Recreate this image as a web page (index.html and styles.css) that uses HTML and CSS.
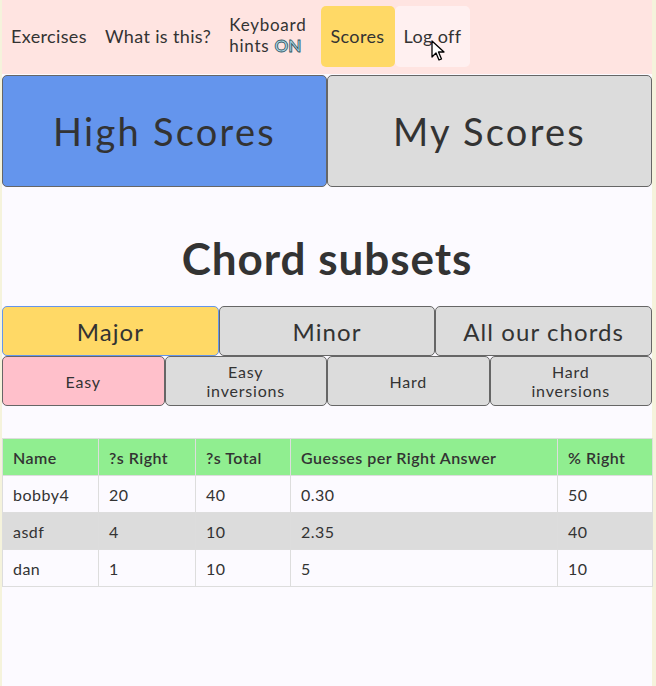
FILE: index.html
```html
<!DOCTYPE html>
<html>
<head>
<meta charset="utf-8">
<link rel="stylesheet" href="styles.css">
</head>
<body>
<div class="page">
  <nav class="nav">
    <a class="nav-item"><span>Exercises</span></a>
    <a class="nav-item"><span>What is this?</span></a>
    <a class="nav-item nav-two"><span>Keyboard<br>hints <span class="on">ON</span></span></a>
    <a class="nav-item active"><span>Scores</span></a>
    <a class="nav-item hover"><span>Log off</span>
      <svg class="cursor" width="14" height="22" viewBox="0 0 14 22"><path d="M1 1 L1 17 L5 13 L8 20 L10.5 19 L7.5 12 L13 12 Z" fill="#fff" stroke="#000" stroke-width="1.3" stroke-linejoin="round"/></svg>
    </a>
  </nav>
  <div class="big-tabs">
    <button class="big-tab blue">High Scores</button>
    <button class="big-tab">My Scores</button>
  </div>
  <h1 class="title">Chord subsets</h1>
  <div class="row3">
    <button class="mid-tab yellow focus">Major</button>
    <button class="mid-tab">Minor</button>
    <button class="mid-tab">All our chords</button>
  </div>
  <div class="row4">
    <button class="small-tab pink">Easy</button>
    <button class="small-tab">Easy<br>inversions</button>
    <button class="small-tab">Hard</button>
    <button class="small-tab">Hard<br>inversions</button>
  </div>
  <table class="scores">
    <colgroup>
      <col class="c1"><col class="c2"><col class="c3"><col class="c4"><col class="c5">
    </colgroup>
    <thead>
      <tr><th>Name</th><th>?s Right</th><th>?s Total</th><th>Guesses per Right Answer</th><th>% Right</th></tr>
    </thead>
    <tbody>
      <tr><td>bobby4</td><td>20</td><td>40</td><td>0.30</td><td>50</td></tr>
      <tr class="alt"><td>asdf</td><td>4</td><td>10</td><td>2.35</td><td>40</td></tr>
      <tr><td>dan</td><td>1</td><td>10</td><td>5</td><td>10</td></tr>
    </tbody>
  </table>
</div>
</body>
</html>
```

FILE: styles.css
```css
html, body {
  margin: 0;
  padding: 0;
  background: #f5f3dc;
  height: 100%;
}
.page {
  margin-left: 2px;
  width: 650px;
  min-height: 686px;
  background: #fcfaff;
  font-family: Lato, "Open Sans", sans-serif;
  color: #333;
}
.nav {
  background: #ffe4e1;
  display: flex;
  align-items: stretch;
  padding: 6px 0 7px 0;
  height: 61px;
}
.nav-item {
  display: flex;
  align-items: center;
  padding: 0 9px 2px;
  font-size: 18px;
  letter-spacing: 0.02em;
  color: #333;
  border-radius: 5px;
  position: relative;
}
.nav-two {
  font-size: 17px;
  letter-spacing: 0.045em;
  line-height: 20.5px;
  padding-right: 14px;
}
.on {
  color: #a9d6e5;
  -webkit-text-stroke: 0.8px #2c5360;
  font-weight: 700;
  letter-spacing: 0;
}
.active {
  background: #ffd966;
  padding: 0 10px 2px;
}
.hover { background: #fff0f0; }
.cursor {
  position: absolute;
  left: 36px;
  top: 34px;
}
button {
  font-family: inherit;
  color: #333;
  border: 1px solid #666;
  border-radius: 5px;
  background: #dcdcdc;
  margin: 0;
  padding: 0;
  cursor: pointer;
}
.big-tabs {
  display: flex;
  margin-top: 1px;
}
.big-tab {
  flex: 1;
  height: 112px;
  font-size: 38px;
  letter-spacing: 0.06em;
}
.blue { background: #6495ed; }
.title {
  margin: 46px 0 23px;
  text-align: center;
  font-size: 44px;
  font-weight: 700;
  line-height: 50px;
  letter-spacing: 0.022em;
}
.row3, .row4 {
  display: flex;
}
.mid-tab {
  flex: 1;
  height: 50px;
  font-size: 24px;
  letter-spacing: 0.045em;
}
.yellow { background: #ffd966; }
.focus { border-color: #6495ed; }
.small-tab {
  flex: 1;
  height: 50px;
  font-size: 16px;
  line-height: 19px;
  letter-spacing: 0.05em;
}
.pink { background: #ffc0cb; }
.scores {
  margin-top: 32px;
  width: 650px;
  border-collapse: collapse;
  table-layout: fixed;
  font-size: 16px;
  letter-spacing: 0.03em;
  border: 1px solid #ddd;
}
.c1 { width: 96px; }
.c2 { width: 97px; }
.c3 { width: 95px; }
.c4 { width: 267px; }
.c5 { width: 95px; }
.scores th, .scores td {
  border: 1px solid #ddd;
  text-align: left;
  padding: 0 10px;
}
.scores th {
  background: #90ee90;
  height: 36px;
  font-weight: 600;
}
.scores td {
  height: 36px;
}
.scores tr.alt td {
  background: #dcdcdc;
}
```
